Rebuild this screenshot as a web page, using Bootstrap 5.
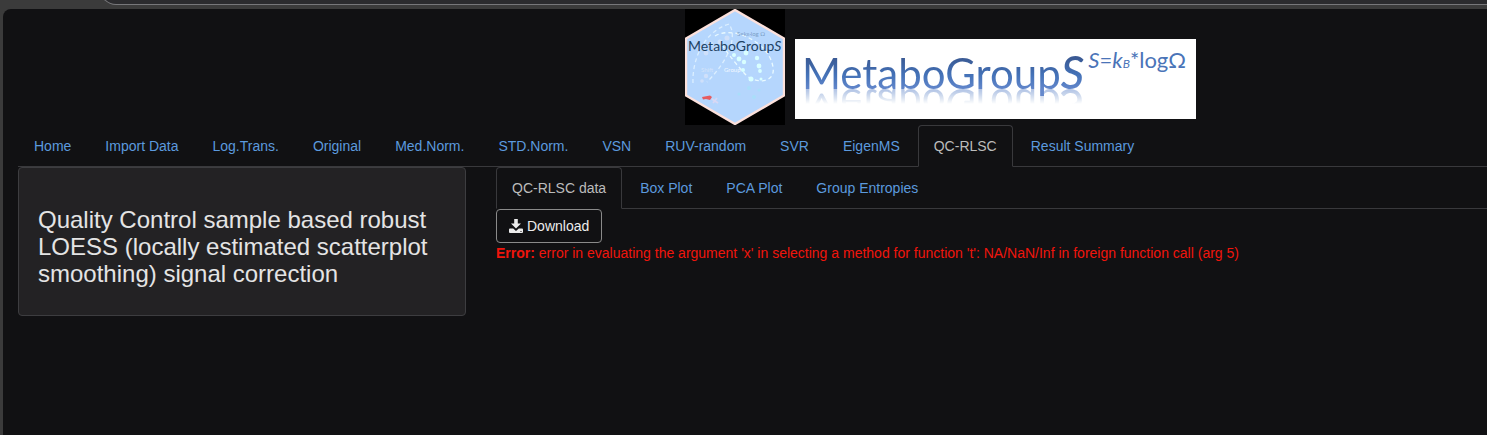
<!DOCTYPE html>
<html lang="en">
<head>
<meta charset="utf-8">
<meta name="viewport" content="width=device-width, initial-scale=1">
<title>MetaboGroupS</title>
<link rel="stylesheet" href="https://cdn.jsdelivr.net/npm/bootstrap@5.3.0/dist/css/bootstrap.min.css">
<style>
  body { background: #3b3b3b; color: #e6e6e6; font: 14px/20px "Liberation Sans", Arial, sans-serif; }
  .chrome-strip { height: 9px; padding: 0 0 4px 100px; }
  .address-bar { flex: 0 0 32px; background: #2b2b2e; border: 1px solid #77777a; border-right: 0; border-radius: 16px 0 0 16px; }
  .page-area { margin-left: 3px; padding-left: 15px; background: #111113; border-top-left-radius: 8px; }
  .brand-row { gap: 10px; padding-left: 45.4%; }
  .brand-hex { width: 100px; height: 116px; background: #000; }
  .brand-banner { width: 401px; height: 80px; margin-bottom: 6px; padding: 9px 0 0 7px; background: #fff; font-family: Lato, sans-serif; }
  .wordmark { font-size: 42px; line-height: 50px; color: transparent; background: linear-gradient(#3a5a94 10px, #4472b8 27px, #6488cc 42px); -webkit-background-clip: text; background-clip: text;
    -webkit-box-reflect: below -18px linear-gradient(to top, transparent 8px, rgba(0,0,0,.5) 9px, transparent 24px); }
  .wordmark-s { font-size: 46px; line-height: 46px; font-style: italic; font-weight: 500; }
  .formula { font-size: 22px; line-height: 24px; color: #4a74b8; margin-left: 4px; }
  .formula sub { font-size: 12px; bottom: 0; }
  .nav-tabs { --bs-nav-tabs-border-color: #39393c; --bs-nav-tabs-link-active-bg: #111113; --bs-nav-tabs-link-active-color: #bcbcbc; --bs-nav-tabs-link-active-border-color: #39393c #39393c #111113; --bs-nav-tabs-link-hover-border-color: #39393c; --bs-nav-tabs-border-radius: 4px; }
  .nav-tabs .nav-item { margin-right: 2px; }
  .nav-tabs .nav-link { padding: 10px 15px; color: #5c9ade; }
  .nav-tabs .nav-link.active { color: #bcbcbc; }
  .side-col { flex: 0 0 auto; width: 32.54%; padding-right: 30px; }
  .info-well { padding: 38px 19px 28px; background: #232224; border: 1px solid #3d3d40; border-radius: 4px; }
  .info-well h3 { font-size: 24px; line-height: 27px; font-weight: 400; margin: 0; color: #e4e4e4; }
  .btn-download { --bs-btn-color: #ececec; --bs-btn-border-color: #8a8a8a; --bs-btn-hover-color: #fff; --bs-btn-hover-border-color: #bbb; padding: 6px 12px; font-size: 14px; line-height: 20px; border-radius: 4px; }
  .shiny-error { color: #f0150c; }
</style>
</head>
<body class="d-flex flex-column min-vh-100">
<div class="chrome-strip d-flex flex-column justify-content-end overflow-hidden"><div class="address-bar"></div></div>
<div class="page-area flex-grow-1">
  <header class="brand-row d-flex align-items-end">
    <svg class="brand-hex flex-shrink-0" viewBox="0 0 100 116" role="img" aria-label="MetaboGroupS logo">
      <path d="M50 1 99 29.500V86.500L50 115 1 86.500V29.500Z" fill="#b5d6fd" stroke="#fce1dc" stroke-width="2.400"/>
      <g fill="none" stroke="#dcefff" stroke-width="1.300" stroke-dasharray="4 3">
        <path d="M8 74C7 49 20 22 44 15c8 11 2 34-22 58"/>
        <path stroke="#eafaff" d="M30 27C48 16 84 33 88 58c3 17-19 17-28 7S42 44 34 31"/>
      </g>
      <g fill="#cfe0fa">
        <circle cx="26" cy="35" r="2.500"/><circle cx="21" cy="44" r="2.400"/><circle cx="35" cy="33" r="2.500"/><circle cx="21" cy="67" r="2.200"/><circle cx="17" cy="72" r="1.800"/><circle cx="42" cy="29" r="2.500"/><circle cx="30" cy="40" r="2"/>
      </g>
      <g fill="#d9ffff">
        <circle cx="49" cy="46" r="2"/><circle cx="54" cy="50" r="2.400"/><circle cx="61" cy="44" r="2.400"/><circle cx="59" cy="53" r="2.200"/><circle cx="72" cy="49" r="2.200"/><circle cx="74" cy="57" r="2.400"/><circle cx="75" cy="62" r="1.900"/><circle cx="66" cy="70" r="2.500"/><circle cx="58" cy="61" r="2"/><circle cx="76" cy="70" r="1.500"/>
      </g>
      <g fill="#a9defa"><circle cx="64" cy="79" r="2"/><circle cx="54" cy="85" r="1.500"/><circle cx="69" cy="88" r="2"/><circle cx="74" cy="81" r="1.500"/></g>
      <path d="M17 88 25 86.500 27 88 25 91 21 90 18 90.500Z" fill="#e65c60"/>
      <path d="M27 90 33 94M32 89 28 94" stroke="#d8d8f4" stroke-width="1.800"/>
      <text x="52" y="27" font-family="Lato, sans-serif" font-size="6" fill="#7c9fc8">S=k<tspan font-size="4">B</tspan>·log Ω</text>
      <text x="16" y="63" font-family="Lato, sans-serif" font-size="6" fill="#d4e4fb">Shift</text>
      <text x="39" y="63" font-family="Lato, sans-serif" font-size="6" fill="#f2f8ff">Group</text>
      <text x="3" y="42" font-family="Lato, sans-serif" font-size="14" fill="#1d4264">MetaboGroup<tspan font-style="italic">S</tspan></text>
    </svg>
    <div class="brand-banner d-flex align-items-start flex-shrink-0 text-nowrap">
      <span class="wordmark">MetaboGroup<span class="wordmark-s">S</span></span>
      <span class="formula"><i>S</i>=<i>k</i><sub><i>B</i></sub>*logΩ</span>
    </div>
  </header>
  <nav aria-label="Methods">
    <ul class="nav nav-tabs">
      <li class="nav-item"><a class="nav-link" href="#">Home</a></li>
      <li class="nav-item"><a class="nav-link" href="#">Import Data</a></li>
      <li class="nav-item"><a class="nav-link" href="#">Log.Trans.</a></li>
      <li class="nav-item"><a class="nav-link" href="#">Original</a></li>
      <li class="nav-item"><a class="nav-link" href="#">Med.Norm.</a></li>
      <li class="nav-item"><a class="nav-link" href="#">STD.Norm.</a></li>
      <li class="nav-item"><a class="nav-link" href="#">VSN</a></li>
      <li class="nav-item"><a class="nav-link" href="#">RUV-random</a></li>
      <li class="nav-item"><a class="nav-link" href="#">SVR</a></li>
      <li class="nav-item"><a class="nav-link" href="#">EigenMS</a></li>
      <li class="nav-item"><a class="nav-link active" aria-current="page" href="#">QC-RLSC</a></li>
      <li class="nav-item"><a class="nav-link" href="#">Result Summary</a></li>
    </ul>
  </nav>
  <div class="row g-0 align-items-start">
    <aside class="side-col">
      <div class="info-well"><h3>Quality Control sample based robust LOESS (locally estimated scatterplot smoothing) signal correction</h3></div>
    </aside>
    <main class="col">
      <ul class="nav nav-tabs">
        <li class="nav-item"><a class="nav-link active" aria-current="true" href="#">QC-RLSC data</a></li>
        <li class="nav-item"><a class="nav-link" href="#">Box Plot</a></li>
        <li class="nav-item"><a class="nav-link" href="#">PCA Plot</a></li>
        <li class="nav-item"><a class="nav-link" href="#">Group Entropies</a></li>
      </ul>
      <button type="button" class="btn btn-download d-flex align-items-center gap-1">
        <svg width="14" height="14" viewBox="0 0 14 14" fill="currentColor" aria-hidden="true"><path d="M5.200 0h3.600v4.500H12L7 9.500 2 4.500h3.200Z"/><path fill-rule="evenodd" d="M1 9.500h3.200L7 12 9.800 9.500H13q1 0 1 1V13q0 1-1 1H1q-1 0-1-1v-2.500q0-1 1-1Zm10.500 2.500v1h1v-1Z"/></svg>
        Download
      </button>
      <div class="shiny-error" role="alert"><strong>Error:</strong> error in evaluating the argument 'x' in selecting a method for function 't': NA/NaN/Inf in foreign function call (arg 5)</div>
    </main>
  </div>
</div>
<script src="https://cdn.jsdelivr.net/npm/bootstrap@5.3.0/dist/js/bootstrap.bundle.min.js"></script>
</body>
</html>
